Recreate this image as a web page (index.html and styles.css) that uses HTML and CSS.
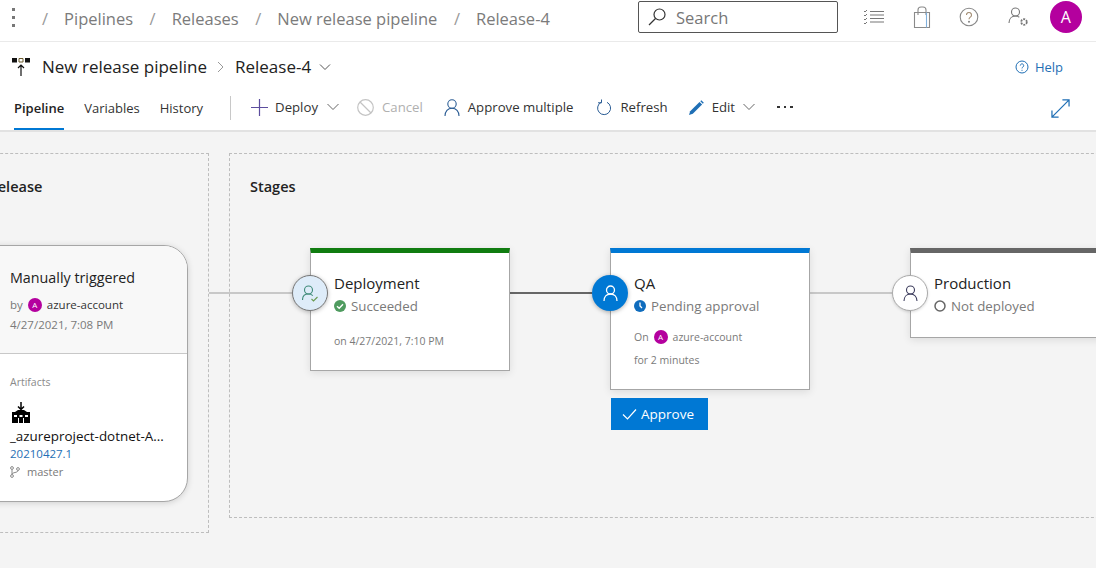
FILE: index.html

```html
<!DOCTYPE html>
<html lang="en">
<head>
  <meta charset="UTF-8">
  <title>Release-4 - Pipelines</title>
  <link rel="stylesheet" href="styles.css">
</head>
<body>
  <header class="topbar">
    <div class="kebab"><i></i><i></i><i></i></div>
    <nav class="crumbs">
      <span class="sep">/</span><a>Pipelines</a>
      <span class="sep">/</span><a>Releases</a>
      <span class="sep">/</span><a>New release pipeline</a>
      <span class="sep">/</span><a>Release-4</a>
    </nav>
    <div class="search">
      <svg width="22" height="22" viewBox="0 0 22 22" fill="none" stroke="#333" stroke-width="1.2"><circle cx="13.5" cy="8.5" r="5.5"/><path d="M9.5 12.5 3 19"/></svg>
      <span>Search</span>
    </div>
    <div class="top-icons">
      <svg width="20" height="18" viewBox="0 0 20 18" fill="none" stroke="#777" stroke-width="1.1"><path d="M6 3.5h14M6 7h14M6 10.500h14M6 14h14"/><path d="M0 3l1 1 2-2M0 7l1 1 2-2M0 11l1 1 2-2M0 15l1 1 2-2" stroke-width="1"/></svg>
      <svg width="18" height="22" viewBox="0 0 18 22" fill="none" stroke="#8a8a8a" stroke-width="1.1"><path d="M1.500 6.500h15v15h-15z"/><path d="M5 9V4a3 3 0 0 1 3-3h2a3 3 0 0 1 3 3v5"/><path d="M13.500 6.500v15" stroke="#7fb0dc"/></svg>
      <svg width="20" height="20" viewBox="0 0 20 20" fill="none" stroke="#888" stroke-width="1.1"><circle cx="10" cy="10" r="8.800"/><path d="M7.500 8a2.500 2.500 0 1 1 3.800 2.100c-.9.600-1.300 1-1.300 2.200" stroke="#a08a70"/><circle cx="10" cy="14.700" r=".5"/></svg>
      <svg width="22" height="22" viewBox="0 0 22 22" fill="none" stroke="#777" stroke-width="1.1"><circle cx="7.500" cy="6" r="4"/><path d="M1 17c0-4 2.500-7 6.500-7 1.500 0 2.800.4 3.800 1.200"/><circle cx="16" cy="16" r="2.800" stroke-width="1.800" stroke-dasharray="2 1"/></svg>
    </div>
    <div class="avatar big">A</div>
  </header>

  <section class="title-row">
    <svg class="pipe-icon" width="18" height="18" viewBox="0 0 18 18"><path d="M0 0h5v4.500H0zM13 0h5v4.500h-5z" fill="#111"/><path d="M7 .5h4v3.500H7z" fill="none" stroke="#6b5a2a"/><path d="M9 7v11M6 10l3-3 3 3" fill="none" stroke="#111" stroke-width="1.200"/></svg>
    <h1>New release pipeline</h1>
    <svg class="crumb-arrow" width="10" height="14" viewBox="0 0 10 14" fill="none" stroke="#999"><path d="M2 2l5 5-5 5"/></svg>
    <h1>Release-4</h1>
    <svg class="chev title-chev" width="12" height="8" viewBox="0 0 12 8" fill="none" stroke="#555"><path d="M1 1.500l5 5 5-5"/></svg>
    <a class="help">
      <svg width="14" height="14" viewBox="0 0 14 14" fill="none" stroke="#1f6fb5"><circle cx="7" cy="7" r="6"/><path d="M5.300 5.500a1.700 1.700 0 1 1 2.600 1.500c-.6.400-.9.700-.9 1.400M7 9.800v1"/></svg>
      Help
    </a>
  </section>

  <section class="toolbar">
    <div class="tabs">
      <a class="tab active">Pipeline</a>
      <a class="tab">Variables</a>
      <a class="tab">History</a>
    </div>
    <div class="divider"></div>
    <div class="actions">
      <a class="act deploy">
        <svg width="17" height="17" viewBox="0 0 17 17" fill="none" stroke="#5c4d9e" stroke-width="1.200"><path d="M8.500 0v17M0 8.500h17"/></svg>
        Deploy
        <svg class="chev" width="12" height="8" viewBox="0 0 12 8" fill="none" stroke="#666"><path d="M.5 1l5.500 5.500L11.500 1"/></svg>
      </a>
      <a class="act cancel">
        <svg width="17" height="17" viewBox="0 0 17 17" fill="none" stroke="#c4c4c4" stroke-width="1.200"><circle cx="8.500" cy="8.500" r="7.800"/><path d="M3 3l11 11"/></svg>
        Cancel
      </a>
      <a class="act approve">
        <svg width="16" height="17" viewBox="0 0 16 17" fill="none" stroke="#2a5c94" stroke-width="1.100"><circle cx="8" cy="5" r="4.200"/><path d="M1 17c0-4.500 2.800-7.800 7-7.800s7 3.300 7 7.800"/></svg>
        Approve multiple
      </a>
      <a class="act refresh">
        <svg width="15" height="17" viewBox="0 0 15 17" fill="none" stroke="#2a5c94" stroke-width="1"><path d="M10 3.300a6.500 6.500 0 1 1-6 .1"/><path d="M4.500 .5v3.300H1"/></svg>
        Refresh
      </a>
      <a class="act edit">
        <svg width="15" height="15" viewBox="0 0 15 15"><path d="M0 15l1.200-3.800L10.500 2l2.600 2.600L3.800 13.800z" fill="#1f6fb5"/><path d="M11.300 1.200l1-1 2.500 2.500-1 1z" fill="#1f6fb5"/></svg>
        Edit
        <svg class="chev" width="12" height="8" viewBox="0 0 12 8" fill="none" stroke="#666"><path d="M.5 1l5.500 5.500L11.500 1"/></svg>
      </a>
      <div class="more"><i></i><i></i><i></i></div>
    </div>
    <svg class="expand" width="19" height="19" viewBox="0 0 20 20" fill="none" stroke="#1f6fb5" stroke-width="1.300"><path d="M1.500 18.500l17-17M12 1h7v7M1 12v7h7"/></svg>
  </section>

  <main class="canvas">
    <div class="panel release-panel"><h2>Release</h2></div>
    <div class="panel stages-panel"><h2>Stages</h2></div>

    <div class="line light" style="left:209px;width:83px"></div>
    <div class="line dark" style="left:510px;width:82px"></div>
    <div class="line light" style="left:810px;width:82px"></div>

    <div class="artifact-card">
      <div class="trigger">
        <div class="trigger-title">Manually triggered</div>
        <div class="by">by <span class="avatar tiny">A</span> <span class="who">azure-account</span></div>
        <div class="when">4/27/2021, 7:08 PM</div>
      </div>
      <div class="artifacts">
        <div class="art-label">Artifacts</div>
        <svg class="factory" width="20" height="21" viewBox="0 0 20 21"><path d="M10 0v7M7 4.500L10 7.500l3-3" fill="none" stroke="#000" stroke-width="1.500"/><path d="M1 10l3 0 3-2 6 0 3 2 3 0v11H1z" fill="#000"/><path d="M3 13h3v2H3zM8.500 13h3v2h-3zM14 13h3v2h-3z" fill="#fff"/><path d="M7 16h1v5H7zM12 16h1v5h-1z" fill="#fff"/></svg>
        <div class="art-name">_azureproject-dotnet-A...</div>
        <div class="art-build">20210427.1</div>
        <div class="art-branch">
          <svg width="10" height="12" viewBox="0 0 10 12" fill="none" stroke="#8a8a8a"><circle cx="2" cy="2" r="1.400"/><circle cx="2" cy="10" r="1.400"/><circle cx="8" cy="3" r="1.400"/><path d="M2 3.500v5M8 4.500C8 7 2 6 2 8.500"/></svg>
          master
        </div>
      </div>
    </div>

    <article class="stage st-ok" style="left:310px;height:123px">
      <div class="stage-name">Deployment</div>
      <div class="stage-status">
        <svg width="12" height="12" viewBox="0 0 12 12"><circle cx="6" cy="6" r="6" fill="#4f9b5f"/><path d="M3 6.200l2.200 2L9 4.200" fill="none" stroke="#fff" stroke-width="1.400"/></svg>
        Succeeded
      </div>
      <div class="stage-note first">on 4/27/2021, 7:10 PM</div>
    </article>

    <article class="stage st-wait" style="left:610px;height:142px">
      <div class="stage-name">QA</div>
      <div class="stage-status">
        <svg width="12" height="12" viewBox="0 0 12 12"><circle cx="6" cy="6" r="6" fill="#0f6cbd"/><path d="M6 2.500V6l2 2" fill="none" stroke="#fff" stroke-width="1.300"/></svg>
        Pending approval
      </div>
      <div class="stage-note on">On <span class="avatar small">A</span> azure-account</div>
      <div class="stage-note">for 2 minutes</div>
    </article>

    <article class="stage st-idle" style="left:910px;height:90px">
      <div class="stage-name">Production</div>
      <div class="stage-status">
        <svg width="12" height="12" viewBox="0 0 12 12" fill="none"><circle cx="6" cy="6" r="5" stroke="#666" stroke-width="1.500"/></svg>
        Not deployed
      </div>
    </article>

    <div class="gate gate-ok" style="left:292px">
      <svg width="16" height="17" viewBox="0 0 16 17" fill="none" stroke="#3f8a78" stroke-width="1.100"><circle cx="6.500" cy="5" r="4"/><path d="M.5 15c0-3.800 2.500-6 6-6 1.800 0 3.300.6 4.300 1.600"/><path d="M9.500 14l2 2 4-4" stroke="#6a9a50"/></svg>
    </div>
    <div class="gate gate-wait" style="left:592px">
      <svg width="15" height="17" viewBox="0 0 15 17" fill="none" stroke="#fff" stroke-width="1.300"><circle cx="7.500" cy="5" r="4"/><path d="M1 16c0-4 2.500-7 6.500-7s6.500 3 6.500 7"/></svg>
    </div>
    <div class="gate gate-idle" style="left:892px">
      <svg width="15" height="17" viewBox="0 0 15 17" fill="none" stroke="#3c3c5c" stroke-width="1.100"><circle cx="7.500" cy="5" r="4"/><path d="M1 16c0-4 2.500-7 6.500-7s6.500 3 6.500 7"/></svg>
    </div>

    <button class="approve-btn">
      <svg width="15" height="12" viewBox="0 0 15 12" fill="none" stroke="#fff" stroke-width="1.200"><path d="M1 6.500l4.500 4.500L14 1.500"/></svg>
      Approve
    </button>
  </main>
</body>
</html>
```

FILE: styles.css

```css
html, body {
  margin: 0;
  height: 100%;
}
body {
  width: 1096px;
  height: 568px;
  overflow: hidden;
  background: #fff;
  color: #222;
  font-family: "Open Sans", "Noto Sans", sans-serif;
  display: flex;
  flex-direction: column;
}
svg {
  display: block;
  flex: none;
}

/* top bar */
.topbar {
  height: 42px;
  box-sizing: border-box;
  padding-bottom: 7px;
  border-bottom: 1px solid #eaeaea;
  display: flex;
  align-items: center;
  flex: none;
}
.kebab {
  width: 3px;
  margin-left: 12px;
  display: flex;
  flex-direction: column;
  gap: 5px;
}
.kebab i, .more i {
  display: block;
  width: 3px;
  height: 3px;
  background: #777;
}
.crumbs {
  margin: 2px 0 0 27px;
  display: flex;
  align-items: center;
  font-size: 16.500px;
  color: #7b7b7b;
  width: 596px;
}
.crumbs .sep {
  color: #999;
  margin-right: 16px;
}
.crumbs a {
  margin-right: 16.500px;
}
.search {
  width: 200px;
  height: 32px;
  border: 1px solid #555;
  border-radius: 2px;
  display: flex;
  align-items: center;
  gap: 8px;
  padding-left: 7px;
  box-sizing: border-box;
  font-size: 16.500px;
  color: #777;
}
.top-icons {
  margin-left: 26px;
  display: flex;
  align-items: center;
  gap: 28.600px;
}
.avatar {
  border-radius: 50%;
  background: #b4009e;
  color: #fff;
  display: inline-flex;
  align-items: center;
  justify-content: center;
}
.avatar.big {
  width: 32px;
  height: 32px;
  font-size: 16px;
  flex: none;
  margin-left: 20px;
}
.avatar.tiny, .avatar.small {
  width: 14px;
  height: 14px;
  font-size: 8px;
}

/* title row */
.title-row {
  height: 47px;
  box-sizing: border-box;
  padding: 2px 0 0 12px;
  display: flex;
  align-items: center;
  flex: none;
  font-size: 16px;
}
.title-row h1 {
  margin: 0;
  font-size: 17px;
  font-weight: 400;
  color: #222;
}
.pipe-icon {
  margin-right: 12px;
}
.crumb-arrow {
  margin: 0 9px 0 9px;
}
.title-chev {
  margin-left: 8px;
}
.help {
  margin-left: auto;
  margin-right: 33px;
  display: flex;
  align-items: center;
  gap: 6px;
  font-size: 13px;
  color: #1f6fb5;
}

/* toolbar */
.toolbar {
  height: 43px;
  flex: none;
  display: flex;
  align-items: flex-start;
  padding-left: 14px;
  font-size: 13.200px;
  box-sizing: border-box;
  border-bottom: 2px solid #e2e2e2;
}
.tabs {
  display: flex;
  gap: 20px;
  font-size: 13px;
}
.tab {
  padding-top: 10px;
  color: #333;
  height: 29px;
}
.tab.active {
  font-weight: 600;
  color: #222;
  border-bottom: 2px solid #0078d4;
}
.divider {
  width: 1px;
  height: 24px;
  background: #c8c8c8;
  margin: 7px 20px 0 27px;
}
.actions {
  display: flex;
  align-items: center;
  height: 36px;
}
.act {
  display: flex;
  align-items: center;
  gap: 8px;
  color: #333;
}
.act.deploy { margin-right: 18px; gap: 7px; }
.act.deploy .chev { margin-left: 2px; }
.act.cancel { color: #b0b0b0; margin-right: 21px; }
.act.approve { margin-right: 24px; }
.act.refresh { margin-right: 21px; }
.more {
  display: flex;
  gap: 4px;
  margin-left: 22px;
}
.more i {
  width: 2.500px;
  height: 2.500px;
  background: #333;
}
.expand {
  margin: 10px 26px 0 auto;
}

/* release canvas: panels and nodes sit at their diagram positions */
.canvas {
  position: relative;
  flex: 1;
  background: #f4f4f4;
  overflow: hidden;
}
.panel {
  position: absolute;
  top: 21px;
  border: 1px dashed #bdbdbd;
  box-sizing: border-box;
}
.panel h2 {
  margin: 23px 0 0 20px;
  font-size: 14.500px;
  font-weight: 600;
  color: #222;
}
.release-panel {
  left: -30px;
  width: 239px;
  height: 380px;
}
.release-panel h2 {
  margin-left: 17.500px;
}
.stages-panel {
  left: 229px;
  width: 900px;
  height: 365px;
}
.line {
  position: absolute;
  top: 160px;
  height: 2px;
}
.line.light { background: #c8c8c8; }
.line.dark { background: #666; }

.artifact-card {
  position: absolute;
  left: -30px;
  top: 113px;
  width: 218px;
  height: 257px;
  box-sizing: border-box;
  border: 1px solid #a6a6a6;
  border-radius: 24px;
  background: #fff;
  overflow: hidden;
  box-shadow: 0 1px 6px rgba(0,0,0,.15);
}
.trigger {
  height: 108px;
  box-sizing: border-box;
  padding: 22px 0 0 39px;
  background: #f8f8f8;
  border-bottom: 1px solid #c8c8c8;
}
.trigger-title {
  font-size: 14.300px;
  color: #222;
  line-height: 20px;
}
.by {
  font-size: 11.500px;
  color: #777;
  margin-top: 10px;
  display: flex;
  align-items: center;
  gap: 5px;
  line-height: 14px;
}
.who { color: #333; }
.when {
  font-size: 11.500px;
  color: #7a7a7a;
  margin-top: 6px;
  line-height: 14px;
}
.artifacts {
  padding: 21px 0 0 39px;
}
.art-label {
  font-size: 10.500px;
  color: #8a8a8a;
  line-height: 14px;
}
.factory {
  margin: 13px 0 0 1px;
}
.art-name {
  font-size: 13.400px;
  color: #111;
  line-height: 18px;
  margin-top: 4px;
}
.art-build {
  font-size: 11.500px;
  color: #1f6fb5;
  line-height: 15px;
  margin-top: 1px;
}
.art-branch {
  font-size: 11px;
  color: #7a7a7a;
  display: flex;
  align-items: center;
  gap: 7px;
  margin-top: 4px;
  line-height: 14px;
}

.stage {
  position: absolute;
  top: 116px;
  width: 200px;
  box-sizing: border-box;
  background: #fff;
  border: 1px solid #a6a6a6;
  border-top: 5px solid #666;
  padding: 20px 0 0 23px;
  box-shadow: 0 2px 8px rgba(0,0,0,.1);
}
.st-ok { border-top-color: #107c10; }
.st-wait { border-top-color: #0078d4; }
.st-idle { border-top-color: #666; }
.stage-name {
  font-size: 15px;
  color: #222;
  line-height: 20px;
}
.stage-status {
  font-size: 13.300px;
  color: #7a7a7a;
  display: flex;
  align-items: center;
  gap: 5px;
  line-height: 18px;
  margin-top: 4px;
}
.stage-note {
  font-size: 10.500px;
  color: #7a7a7a;
  line-height: 14px;
  margin-top: 9px;
}
.stage-note.first { margin-top: 19px; }
.stage-note.on {
  margin-top: 15px;
  display: flex;
  align-items: center;
  gap: 5px;
}
.gate {
  position: absolute;
  top: 143px;
  width: 36px;
  height: 36px;
  box-sizing: border-box;
  border-radius: 50%;
  display: flex;
  align-items: center;
  justify-content: center;
}
.gate-ok {
  background: #deecf9;
  border: 1px solid #777;
  box-shadow: 0 1px 4px rgba(0,0,0,.25);
}
.gate-wait {
  background: #0078d4;
  box-shadow: 0 1px 4px rgba(0,0,0,.3);
}
.gate-idle {
  background: #fff;
  border: 1px solid #aaa;
  box-shadow: 0 1px 3px rgba(0,0,0,.15);
}
.approve-btn {
  position: absolute;
  left: 611px;
  top: 266px;
  width: 97px;
  height: 32px;
  border: 0;
  padding: 0 0 0 11px;
  background: #0078d4;
  color: #fff;
  display: flex;
  align-items: center;
  gap: 4px;
  font-family: inherit;
  font-size: 13.500px;
}
```
